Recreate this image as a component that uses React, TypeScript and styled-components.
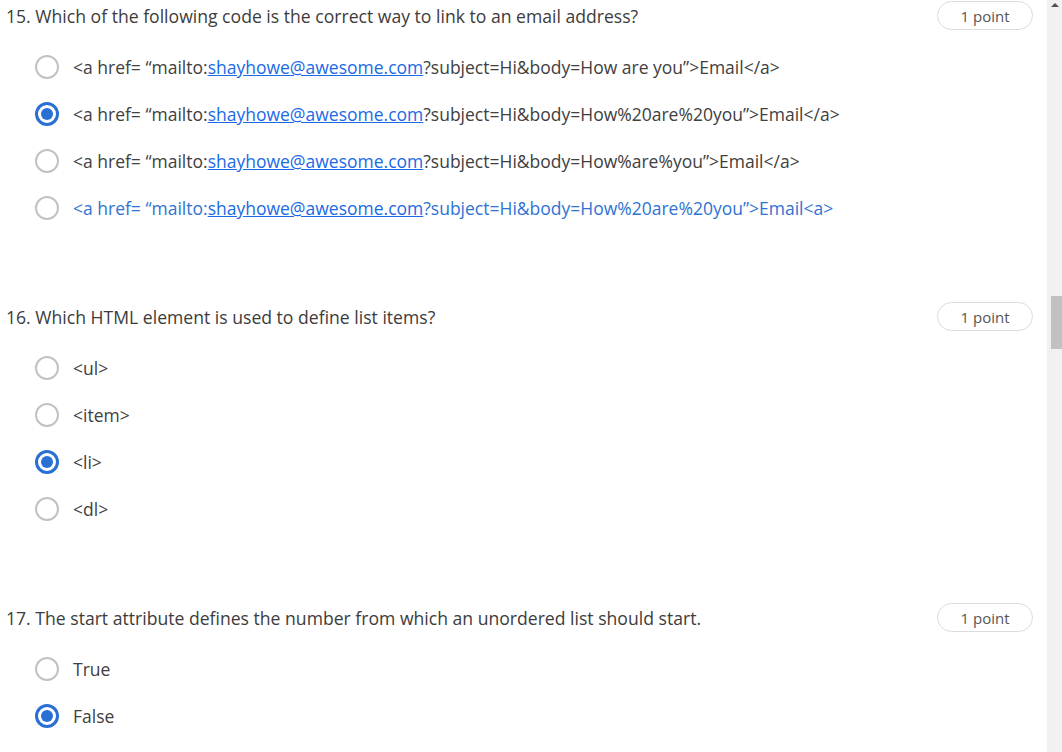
import React from "react";
import styled, { createGlobalStyle } from "styled-components";

const Global = createGlobalStyle`
  html, body { margin: 0; padding: 0; background: #fff; }
  body { font-family: "Open Sans", "Noto Sans", sans-serif; color: #404040; overflow: hidden; }
`;

const Page = styled.div`
  display: flex;
  width: 1062px;
  height: 752px;
  overflow: hidden;
`;

const Content = styled.main`
  flex: 1;
  padding: 1px 14px 0 6px;
  display: flex;
  flex-direction: column;
  gap: 82px;
`;

const Question = styled.section`
  display: flex;
  flex-direction: column;
  gap: 25px;
`;

const TitleRow = styled.div`
  display: flex;
  align-items: center;
  justify-content: space-between;
  height: 29px;
`;

const Title = styled.div`
  font-size: 17.6px;
  line-height: 24px;
  color: #3c3c3c;
  white-space: nowrap;
`;

const Points = styled.div`
  box-sizing: border-box;
  width: 96px;
  height: 29px;
  border: 1px solid #dcdcdc;
  border-radius: 15px;
  display: flex;
  align-items: center;
  justify-content: center;
  font-size: 15px;
  color: #555;
`;

const Options = styled.div`
  display: flex;
  flex-direction: column;
  gap: 23px;
  padding-left: 29px;
`;

const Option = styled.label<{ $blue?: boolean }>`
  display: flex;
  align-items: center;
  gap: 14px;
  height: 24px;
  font-size: 17.5px;
  white-space: nowrap;
  color: ${(p) => (p.$blue ? "#2f73d3" : "#404040")};
`;

const Radio = styled.span<{ $checked?: boolean }>`
  box-sizing: border-box;
  width: 24px;
  height: 24px;
  border-radius: 50%;
  flex-shrink: 0;
  border: ${(p) => (p.$checked ? "3px solid #2a70d4" : "2px solid #c2c2c2")};
  display: flex;
  align-items: center;
  justify-content: center;
  &::after {
    content: "";
    display: ${(p) => (p.$checked ? "block" : "none")};
    width: 12px;
    height: 12px;
    border-radius: 50%;
    background: #2a70d4;
  }
`;

const Link = styled.span`
  color: #1a6ae6;
  text-decoration: underline;
`;

const Scrollbar = styled.div`
  width: 15px;
  background: #f1f1f1;
  display: flex;
  flex-direction: column;
  align-items: center;
`;

const Arrow = styled.div`
  margin-top: 3px;
  width: 0;
  height: 0;
  border-left: 4px solid transparent;
  border-right: 4px solid transparent;
  border-bottom: 4px solid #505050;
`;

const Track = styled.div`
  flex: 1;
  width: 100%;
  display: flex;
  justify-content: center;
  padding-top: 289px;
`;

const Thumb = styled.div`
  width: 11px;
  height: 53px;
  background: #c1c1c1;
  margin-left: 3px;
`;

type Opt = { content: React.ReactNode; checked?: boolean; blue?: boolean };

const email = (rest: string) => (
  <>
    {"<a href= \u201cmailto:"}
    <Link>shayhowe@awesome.com</Link>
    {rest}
  </>
);

const questions: { title: string; options: Opt[] }[] = [
  {
    title: "15. Which of the following code is the correct way to link to an email address?",
    options: [
      { content: email("?subject=Hi&body=How are you\u201d>Email</a>") },
      { content: email("?subject=Hi&body=How%20are%20you\u201d>Email</a>"), checked: true },
      { content: email("?subject=Hi&body=How%are%you\u201d>Email</a>") },
      { content: email("?subject=Hi&body=How%20are%20you\u201d>Email<a>"), blue: true },
    ],
  },
  {
    title: "16. Which HTML element is used to define list items?",
    options: [
      { content: "<ul>" },
      { content: "<item>" },
      { content: "<li>", checked: true },
      { content: "<dl>" },
    ],
  },
  {
    title: "17. The start attribute defines the number from which an unordered list should start.",
    options: [{ content: "True" }, { content: "False", checked: true }],
  },
];

export default function App() {
  return (
    <Page>
      <Global />
      <Content>
        {questions.map((q, i) => (
          <Question key={i}>
            <TitleRow>
              <Title>{q.title}</Title>
              <Points>1 point</Points>
            </TitleRow>
            <Options>
              {q.options.map((o, j) => (
                <Option key={j} $blue={o.blue}>
                  <Radio $checked={o.checked} />
                  <span>{o.content}</span>
                </Option>
              ))}
            </Options>
          </Question>
        ))}
      </Content>
      <Scrollbar>
        <Arrow />
        <Track>
          <Thumb />
        </Track>
      </Scrollbar>
    </Page>
  );
}
